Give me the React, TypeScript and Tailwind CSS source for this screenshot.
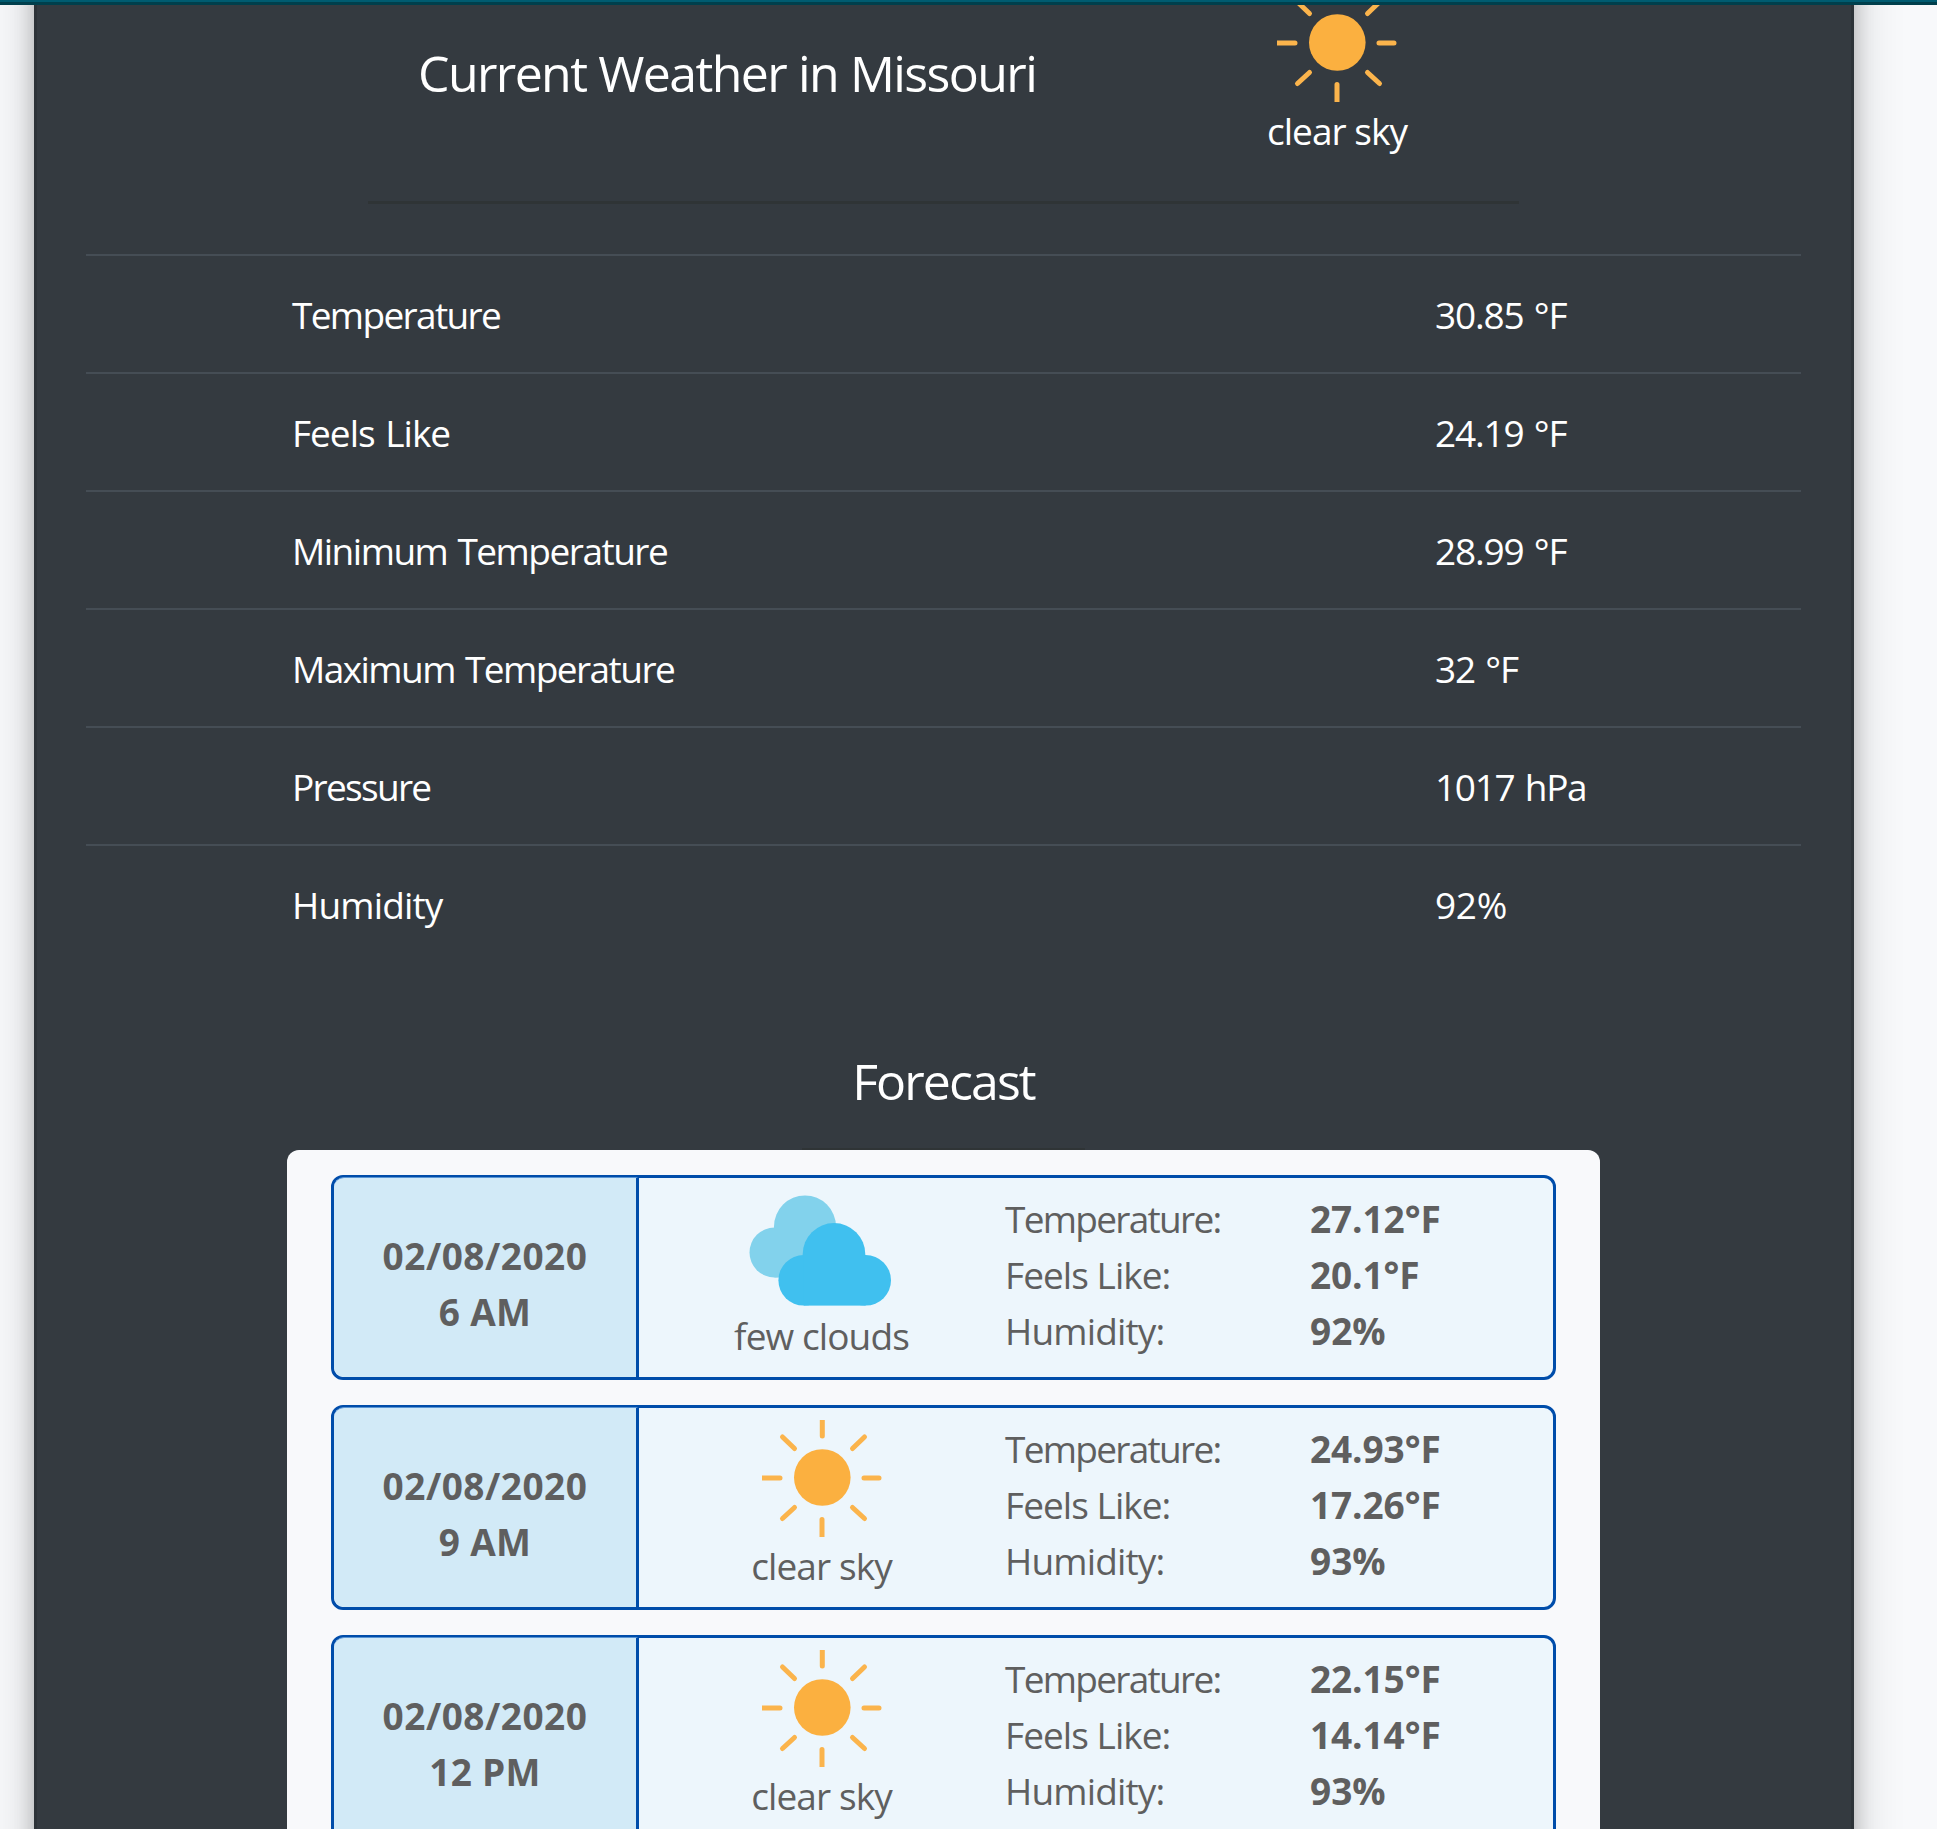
const readings = [
  { label: "Temperature", value: "30.85 °F", labelTracking: "tracking-[-1.65px]", valueTracking: "tracking-[-1.2px]" },
  { label: "Feels Like", value: "24.19 °F", labelTracking: "tracking-[-1px]", valueTracking: "tracking-[-1.2px]" },
  { label: "Minimum Temperature", value: "28.99 °F", labelTracking: "tracking-[-1.5px]", valueTracking: "tracking-[-1.2px]" },
  { label: "Maximum Temperature", value: "32 °F", labelTracking: "tracking-[-1.55px]", valueTracking: "tracking-[-1.2px]" },
  { label: "Pressure", value: "1017 hPa", labelTracking: "tracking-[-1.7px]", valueTracking: "tracking-[-1.3px]" },
  { label: "Humidity", value: "92%", labelTracking: "tracking-[-0.85px]", valueTracking: "tracking-[-0.3px]" },
];

const forecast = [
  { hour: "6 AM", sky: "few clouds", temp: "27.12°F", feels: "20.1°F", humidity: "92%" },
  { hour: "9 AM", sky: "clear sky", temp: "24.93°F", feels: "17.26°F", humidity: "93%" },
  { hour: "12 PM", sky: "clear sky", temp: "22.15°F", feels: "14.14°F", humidity: "93%" },
];

function Sun() {
  return (
    <svg width="120" height="117" viewBox="0 0 120 117" fill="#fbb040" className="block shrink-0 blur-[0.6px]">
      <circle cx="60.3" cy="57.5" r="28.3" />
      <g stroke="#fbb44c" strokeWidth="5" strokeLinecap="round">
        <path d="M60.3 -3V16M60 99.5V120M-3 58H18M102 58H117" />
        <path d="M20.5 17L32.5 28.5M102.5 17L90.5 28.5M20.5 98.5L32.5 87.5M102.5 98.5L90.5 87.5" />
      </g>
    </svg>
  );
}

function Clouds() {
  return (
    <svg width="146" height="117" viewBox="0 0 146 117" className="block shrink-0 blur-[0.6px]">
      <g fill="#82d2ec">
        <circle cx="56" cy="36.5" r="31" />
        <circle cx="25.5" cy="62.5" r="25" />
        <rect x="25.5" y="36" width="50" height="51.5" />
      </g>
      <g fill="#40c0ef">
        <circle cx="85" cy="64.3" r="31.3" />
        <circle cx="54.7" cy="90.3" r="25.3" />
        <circle cx="116.7" cy="90.3" r="25.3" />
        <rect x="54.7" y="65" width="62" height="50.6" />
      </g>
    </svg>
  );
}

export default function App() {
  return (
    <div className="h-[1829px] w-[1937px] overflow-hidden bg-[#f8f9fb] [font-family:'Open_Sans','Noto_Sans',sans-serif] text-[37px] leading-[56px]">
      <div className="relative z-10 h-[5px] border-b-[3px] border-[#003f4c] bg-[#005b70]" />
      <main className="-mt-[100px] ml-[34px] h-[2000px] w-[1820px] border-x-[3px] border-[#2d3338] bg-[#343a40] pt-[100px] pr-px text-white shadow-[0_9px_19px_rgba(0,0,0,0.2),0_14px_47px_rgba(0,0,0,0.19)]">
        <header className="mx-auto flex h-[199px] w-[1151px] border-b-[3px] border-[#2f3436]">
          <h1 className="w-[788px] pt-[36px] pl-[50px] text-[50px] leading-[64px] tracking-[-1.6px] whitespace-nowrap [word-spacing:0.5px]">Current Weather in Missouri</h1>
          <div className="-mt-[20px] flex w-[362px] flex-col items-center">
            <Sun />
            <span className="mt-px tracking-[-0.95px] whitespace-nowrap">clear sky</span>
          </div>
        </header>
        <dl className="mx-auto mt-[50px] w-[1715px] [word-spacing:2px]">
          {readings.map((r) => (
            <div key={r.label} className="flex h-[118px] items-center border-t-2 border-[#454d55] pt-px">
              <dt className={`w-[1143px] pl-[206px] ${r.labelTracking}`}>{r.label}</dt>
              <dd className={`pl-[206px] ${r.valueTracking}`}>{r.value}</dd>
            </div>
          ))}
        </dl>
        <h2 className="mt-[87px] text-center text-[50px] leading-[64px] tracking-[-1.9px]">Forecast</h2>
        <div className="mx-auto mt-[35px] w-[283px] border-t-2 border-[#2f3436]" />
        <section className="mx-auto flex h-[800px] w-[1313px] flex-col gap-[25px] rounded-xl bg-[#f8f9fb] px-[44px] pt-[25px] text-[#5f5f5f]">
          {forecast.map((f) => (
            <article key={f.hour} className="flex h-[205px] shrink-0 rounded-xl border-[3px] border-[#004daa] bg-[#edf6fc]">
              <div className="-mt-px flex w-[305px] flex-col items-center justify-center rounded-l-[10px] border-t border-r-[3px] border-t-[#5a96d4] border-r-[#004daa] bg-[#d2eaf7] pt-[13px] font-bold">
                <span className="tracking-[0.5px]">02/08/2020</span>
                <span className="tracking-[0.3px]">{f.hour}</span>
              </div>
              <div className="flex w-[366px] flex-col items-center pt-[12px] pr-px">
                {f.sky === "clear sky" ? <Sun /> : <Clouds />}
                <span className="mt-px tracking-[-0.9px]">{f.sky}</span>
              </div>
              <dl className="grid flex-1 grid-cols-[305px_1fr] content-start pt-[13px]">
                <dt className="tracking-[-1.7px]">Temperature:</dt>
                <dd className="font-bold tracking-[-0.1px]">{f.temp}</dd>
                <dt className="tracking-[-0.95px]">Feels Like:</dt>
                <dd className="font-bold tracking-[-0.1px]">{f.feels}</dd>
                <dt className="tracking-[-0.85px]">Humidity:</dt>
                <dd className="font-bold">{f.humidity}</dd>
              </dl>
            </article>
          ))}
        </section>
      </main>
    </div>
  );
}
